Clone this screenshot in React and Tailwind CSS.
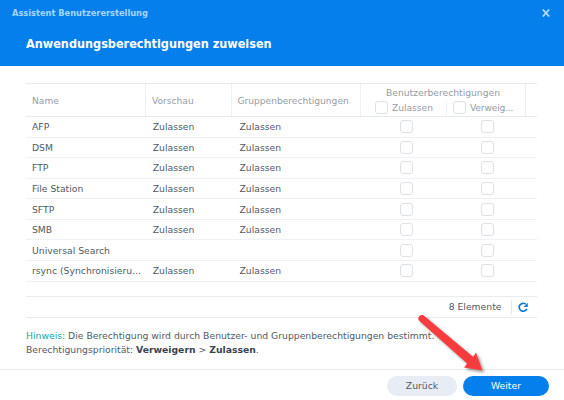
const rows = [
  ['AFP', true], ['DSM', true], ['FTP', true], ['File Station', true],
  ['SFTP', true], ['SMB', true], ['Universal Search', false], ['rsync (Synchronisieru...', true],
];

function Checkbox() {
  return <span role="checkbox" aria-checked="false" className="block h-[13px] w-[13px] shrink-0 rounded-[3px] border border-[#dde2e9] bg-white" />;
}

function Row({ name, allowed }) {
  return (
    <div className="grid h-[20.57px] grid-cols-[120px_85.5px_129px_81px_95px] items-center border-b border-[#eff2f5]">
      <span className="pt-px pl-[6px]">{name}</span>
      <span className="pt-px pl-[6.7px]">{allowed ? 'Zulassen' : ''}</span>
      <span className="pt-px pl-[8px]">{allowed ? 'Zulassen' : ''}</span>
      <span className="pl-[39.5px]"><Checkbox /></span>
      <span className="pl-[39.5px]"><Checkbox /></span>
    </div>
  );
}

export default function App() {
  return (
    <div className="relative flex h-[400px] w-[564px] flex-col overflow-hidden bg-white font-['DejaVu_Sans','Verdana',sans-serif] text-[9.25px] leading-[14px] text-[#505a66]">
      <header className="h-[66px] shrink-0 bg-[#057feb] font-['DejaVu_Sans_Condensed','DejaVu_Sans',sans-serif] font-bold">
        <div className="flex h-[26px] items-center justify-between pr-[14px] pl-[12px] text-[#a6d5ff]">
          <span className="text-[9.2px]">Assistent Benutzererstellung</span>
          <svg width="8" height="8" viewBox="0 0 8 8" fill="none" stroke="#b9deff" strokeWidth="1.7"><path d="M.8.5 7.2 7.5M7.2.5.8 7.5" /></svg>
        </div>
        <h1 className="pt-[10px] pl-[26px] text-[12.55px] leading-[16px] text-white">Anwendungsberechtigungen zuweisen</h1>
      </header>
      <main className="h-[303px] shrink-0 pt-[17px] pl-[26px]">
        <section className="w-[510.5px]">
          <div className="flex h-[34px] border-y border-[#e4e9ee] text-[9.1px] text-[#969ca5]">
            <div className="flex w-[120px] items-center border-r border-[#eceff3] pt-[2px] pl-[6px]">Name</div>
            <div className="flex w-[85.5px] items-center border-r border-[#eceff3] pt-[2px] pl-[6px]">Vorschau</div>
            <div className="flex w-[129px] items-center border-r border-[#eceff3] pt-[2px] pl-[6px]">Gruppenberechtigungen</div>
            <div className="w-[165px] border-r border-[#eceff3] pt-[2px]">
              <div className="pl-[1px] text-center text-[9.2px]">Benutzerberechtigungen</div>
              <div className="flex h-[15px] items-center">
                <div className="flex w-[85px] items-center gap-[4px] pl-[14.5px]"><Checkbox />Zulassen</div>
                <div className="flex items-center gap-[4px] border-l border-[#eceff3] pl-[6.5px]"><Checkbox /><span className="tracking-[-0.15px]">Verweig...</span></div>
              </div>
            </div>
          </div>
          {rows.map(([name, allowed]) => <Row key={name} name={name} allowed={allowed} />)}
          <div className="mt-[14.5px] flex h-[21.5px] items-center justify-end border-y border-[#e8ecf0] pr-[8.5px]">
            <span className="pt-px">8 Elemente</span>
            <span className="mr-[6px] ml-[9px] h-[14px] w-px bg-[#e4e8ed]" />
            <svg width="10.5" height="10.5" viewBox="0 0 10 10" fill="none"><path d="M8.4 6.6A3.8 3.8 0 1 1 7.4 2.1" stroke="#0878dc" strokeWidth="1.6" /><path d="M9.3.7v4H5.4z" fill="#0878dc" /></svg>
          </div>
        </section>
        <div className="pt-[11px] leading-[14.5px] whitespace-nowrap">
          <p><span className="text-[#16a6a6]">Hinweis:</span> Die Berechtigung wird durch Benutzer- und Gruppenberechtigungen bestimmt.</p>
          <p>Berechtigungspriorität: <b className="text-[#39434f]">Verweigern</b> &gt; <b className="text-[#39434f]">Zulassen</b>.</p>
        </div>
      </main>
      <footer className="flex h-[31px] shrink-0 justify-end gap-[6px] border-t border-[#e8ecf0] pt-[6px] pr-[15px]">
        <button className="h-[20px] w-[70px] rounded-full bg-[#e8ecf4] text-[#505a66]">Zurück</button>
        <button className="h-[20px] w-[86px] rounded-full bg-[#057feb] text-white">Weiter</button>
      </footer>
      <svg className="absolute top-[305px] left-[410px] drop-shadow-[2px_2px_1.5px_rgba(0,0,0,0.4)]" width="85" height="75" viewBox="410 305 85 75">
        <path d="M424.3 316 473 356.8 476 352.6 482.4 370.4 464 367.4 467.2 363.4 419.5 321A3.2 3.2 0 0 1 424.3 316Z" fill="#f83c3e" />
      </svg>
    </div>
  );
}
